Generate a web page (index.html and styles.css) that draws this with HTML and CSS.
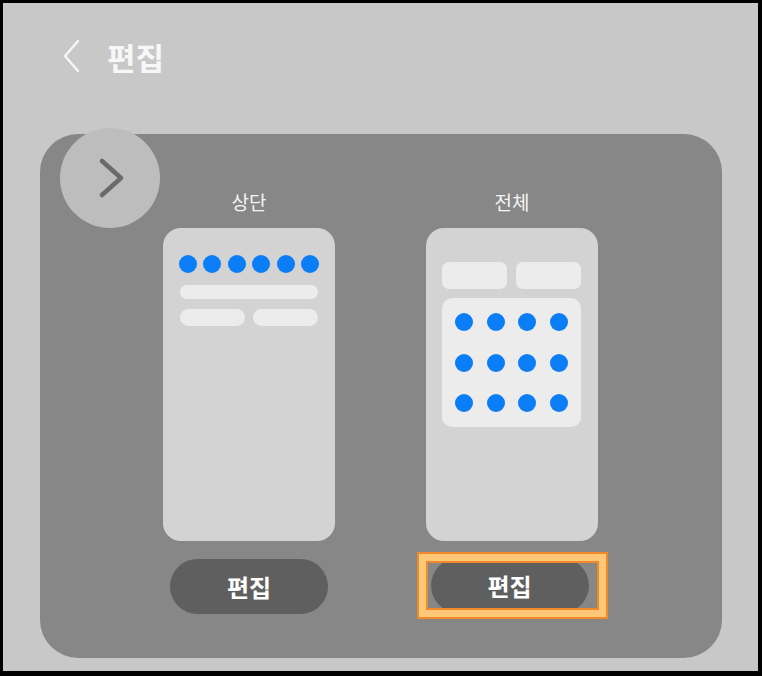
FILE: index.html
```html
<!DOCTYPE html>
<html>
  <head>
    <meta charset="utf-8" />
    <link rel="stylesheet" href="styles.css">
  </head>
  <body>
    <div class="screen">
      <div class="header">
        <svg class="back" width="18" height="34" viewBox="0 0 18 34">
          <path d="M16 2 L3 17 L16 32" fill="none" stroke="#f7f7f7" stroke-width="2.4" stroke-linecap="round" stroke-linejoin="round" />
        </svg>
        <div class="title">편집</div>
      </div>

      <div class="card">
        <!-- floating next button over the card corner -->
        <div class="next">
          <svg width="30" height="42" viewBox="0 0 30 42">
            <path d="M5 4 L24 21 L5 38" fill="none" stroke="#6a6a6a" stroke-width="4.5" stroke-linecap="round" stroke-linejoin="round" />
          </svg>
        </div>

        <div class="column">
          <div class="label">상단</div>
          <div class="phone phone-top">
            <div class="dot-row">
              <span class="dot"></span><span class="dot"></span><span class="dot"></span>
              <span class="dot"></span><span class="dot"></span><span class="dot"></span>
            </div>
            <div class="bar"></div>
            <div class="bar-pair">
              <div class="bar small"></div>
              <div class="bar small"></div>
            </div>
          </div>
          <button class="edit-btn">편집</button>
        </div>

        <div class="column">
          <div class="label">전체</div>
          <div class="phone phone-all">
            <div class="box-pair">
              <div class="box"></div>
              <div class="box"></div>
            </div>
            <div class="grid-box">
              <span class="dot"></span><span class="dot"></span><span class="dot"></span><span class="dot"></span>
              <span class="dot"></span><span class="dot"></span><span class="dot"></span><span class="dot"></span>
              <span class="dot"></span><span class="dot"></span><span class="dot"></span><span class="dot"></span>
            </div>
          </div>
          <div class="highlight">
            <div class="highlight-inner">
              <button class="edit-btn">편집</button>
            </div>
          </div>
        </div>
      </div>
    </div>
  </body>
</html>
```

FILE: styles.css
```css
body {
  margin: 0;
  background-color: #000000;
  font-family: "Noto Sans CJK KR", "Noto Sans", sans-serif;
}

.screen {
  margin: 3px 0 0 3px;
  width: 755px;
  height: 668px;
  background-color: #c8c8c8;
  overflow: hidden;
}

.header {
  display: flex;
  align-items: center;
  height: 106px;
  padding-left: 59px;
}

.back {
  display: block;
}

.title {
  margin-left: 27px;
  font-size: 31px;
  font-weight: 700;
  color: #f7f7f7;
}

.card {
  position: relative;
  margin: 25px 36px 0 37px;
  height: 524px;
  border-radius: 38px;
  background-color: #878787;
  display: flex;
  justify-content: center;
  gap: 91px;
  padding-top: 55px;
  padding-right: 1px;
  box-sizing: border-box;
}

.next {
  position: absolute;
  left: 20px;
  top: -6px;
  width: 100px;
  height: 100px;
  border-radius: 50%;
  background-color: #bdbdbd;
  display: flex;
  align-items: center;
  justify-content: center;
}

.next svg {
  margin-left: 4px;
}

.column {
  width: 172px;
  display: flex;
  flex-direction: column;
  align-items: center;
}

.label {
  height: 39px;
  font-size: 19px;
  line-height: 26px;
  color: #f4f4f4;
}

.phone {
  width: 172px;
  height: 313px;
  border-radius: 18px;
  background-color: #d3d3d3;
  box-sizing: border-box;
}

.dot {
  display: block;
  width: 18px;
  height: 18px;
  border-radius: 50%;
  background-color: #0b7df5;
}

.phone-top {
  padding: 27px 16px 0 16px;
}

.dot-row {
  display: flex;
  justify-content: space-between;
}

.bar {
  height: 14px;
  margin: 12px 1px 0 1px;
  border-radius: 8px;
  background-color: #ececec;
}

.bar-pair {
  display: flex;
  gap: 8px;
  margin: 10px 1px 0 1px;
}

.bar.small {
  flex: 1;
  height: 17px;
  margin: 0;
  border-radius: 9px;
}

.phone-all {
  padding: 34px 17px 0 16px;
}

.box-pair {
  display: flex;
  gap: 9px;
}

.box {
  flex: 1;
  height: 27px;
  border-radius: 7px;
  background-color: #ececec;
}

.grid-box {
  margin-top: 9px;
  height: 129px;
  border-radius: 10px;
  background-color: #ececec;
  display: grid;
  grid-template-columns: repeat(4, 18px);
  grid-template-rows: repeat(3, 18px);
  justify-content: space-between;
  align-content: space-between;
  padding: 15px 13px;
  box-sizing: border-box;
}

.edit-btn {
  flex: none;
  width: 158px;
  height: 55px;
  margin-top: 18px;
  border: none;
  border-radius: 28px;
  background-color: #5f5f5f;
  color: #ffffff;
  font-family: "Noto Sans CJK KR", "Noto Sans", sans-serif;
  font-size: 24px;
  font-weight: 700;
  padding: 0;
}

.highlight {
  flex: none;
  margin-top: 11px;
  width: 191px;
  height: 67px;
  box-sizing: border-box;
  border: 2px solid #f0892a;
  background-color: #ffc878;
  padding: 7px;
}

.highlight-inner {
  height: 100%;
  box-sizing: border-box;
  border: 2px solid #f0892a;
  background-color: #878787;
  overflow: hidden;
  display: flex;
  align-items: center;
  padding-left: 3px;
}

.highlight-inner .edit-btn {
  margin-top: 0;
}
```
